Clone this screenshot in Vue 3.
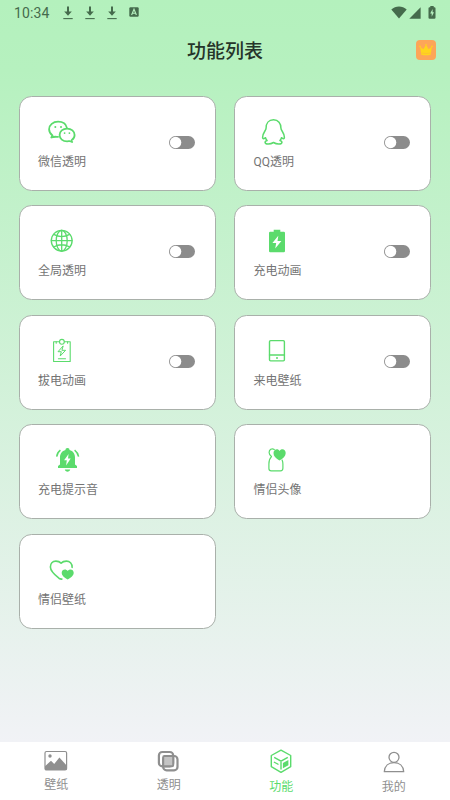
<script setup>
import { ref } from 'vue'

const features = ref([
  { icon: 'wechat', label: '微信透明', toggle: true, on: false },
  { icon: 'qq', label: 'QQ透明', toggle: true, on: false },
  { icon: 'globe', label: '全局透明', toggle: true, on: false },
  { icon: 'battery', label: '充电动画', toggle: true, on: false },
  { icon: 'clipboard', label: '拔电动画', toggle: true, on: false },
  { icon: 'phone', label: '来电壁纸', toggle: true, on: false },
  { icon: 'bell', label: '充电提示音', toggle: false, on: false },
  { icon: 'avatar', label: '情侣头像', toggle: false, on: false },
  { icon: 'hearts', label: '情侣壁纸', toggle: false, on: false }
])

const tabs = [
  { icon: 'picture', label: '壁纸' },
  { icon: 'layers', label: '透明' },
  { icon: 'cube', label: '功能' },
  { icon: 'person', label: '我的' }
]
const active = ref('cube')
</script>

<template>
  <div class="screen">
    <div class="status">
      <span class="time">10:34</span>
      <svg v-for="n in 3" :key="n" class="download" viewBox="0 0 10 14">
        <path d="M5 0.5V7" stroke="currentColor" stroke-width="2" fill="none" />
        <path d="M1.2 5.6H8.8L5 9.8Z" fill="currentColor" />
        <path d="M0.3 12.6H9.7" stroke="currentColor" stroke-width="1.1" />
      </svg>
      <svg class="app-badge" viewBox="0 0 10 10">
        <rect x="0.3" y="0.2" width="9.4" height="9.6" rx="1.2" fill="currentColor" />
        <path d="M2.6 8L5 2.2L7.4 8M3.5 6.2H6.5" fill="none" stroke="#b7f2c0" stroke-width="1.1" />
      </svg>
      <span class="spacer"></span>
      <svg class="wifi" viewBox="0 0 16 13"><path d="M0.3 3.5C4.7-.6 11.3-.6 15.7 3.5L8 12.6Z" fill="currentColor" /></svg>
      <svg class="signal" viewBox="0 0 12 12"><path d="M11.6 0.2V11.7H0.3Z" fill="currentColor" /></svg>
      <svg class="charge" viewBox="0 0 8 13">
        <path d="M2.3 0H5.7V1.2H6.4Q7.5 1.2 7.5 2.3V11.8Q7.5 12.8 6.4 12.8H1.6Q.5 12.8 .5 11.8V2.3Q.5 1.2 1.6 1.2H2.3Z" fill="currentColor" />
        <path d="M4.6 3L2.2 7.5H3.7V10.8L6 6.3H4.6Z" fill="#b7f2c0" />
      </svg>
    </div>

    <header class="header">
      <h1>功能列表</h1>
      <svg class="crown" viewBox="0 0 20 20">
        <rect width="20" height="20" rx="4" fill="#fda658" />
        <path d="M4.1 6.5L7.3 9.3L10 4.8L12.7 9.3L15.9 6.5L14.7 14.8Q10 15.8 5.3 14.8Z" fill="#ffd51c" />
        <circle cx="4" cy="6.4" r=".8" fill="#ffd51c" /><circle cx="10" cy="4.8" r=".8" fill="#ffd51c" /><circle cx="16" cy="6.4" r=".8" fill="#ffd51c" />
        <path d="M5.2 13Q10 14 14.8 13" fill="none" stroke="#fdb53c" stroke-width=".6" />
      </svg>
    </header>

    <main class="grid">
      <section v-for="item in features" :key="item.icon" class="card">
        <div class="info">
          <svg class="icon" viewBox="0 0 44 30" fill="none" stroke="currentColor" stroke-width="1.5" stroke-linecap="round" stroke-linejoin="round">
            <g v-if="item.icon === 'wechat'" stroke-width="1.8">
              <path d="M28.8 11.6C28 7.9 24.4 5.7 20.1 5.7C15 5.7 11.1 9 11.1 13.2C11.1 16 12.4 17.9 14.5 19.5L13.3 21.5C15.5 20.5 17.4 20.8 20.1 20.8" />
              <path d="M33.8 24C35.7 22.8 36.6 21.1 36.6 19C36.6 15.3 33.3 12.6 29.1 12.6C24.9 12.6 21.6 15.3 21.6 19C21.6 22.8 24.9 25.3 29.1 25.3C31.4 25.3 32.3 24.6 34.2 26" />
              <g fill="currentColor" stroke="none"><circle cx="17.3" cy="10.9" r="1" /><circle cx="23" cy="10.9" r="1" /><circle cx="26.6" cy="17.1" r=".9" /><circle cx="31.4" cy="17.1" r=".9" /></g>
            </g>
            <path v-else-if="item.icon === 'qq'" d="M20.5 3.8C15.6 3.8 13.1 7.4 13.1 12C13.1 14.6 9.5 17.1 9.6 21.2C9.7 23.8 11.2 22.6 12.5 21.7C12.7 23 13.3 23.8 14.1 24.5C11.2 25.4 11.4 27.9 14.9 28C17.4 28.1 18.9 27.5 20.5 26.5C22.1 27.5 23.6 28.1 26.1 28C29.6 27.9 29.8 25.4 26.9 24.5C27.7 23.8 28.3 23 28.5 21.7C29.8 22.6 31.3 23.8 31.4 21.2C31.5 17.1 27.9 14.6 27.9 12C27.9 7.4 25.4 3.8 20.5 3.8Z" />
            <g v-else-if="item.icon === 'globe'" stroke-width="1.3">
              <circle cx="23.7" cy="15.7" r="10.4" /><ellipse cx="23.7" cy="15.7" rx="5.5" ry="10.4" />
              <path d="M23.7 5.3V26.1M13.3 15.7H34.1M15.7 9.4Q23.7 13.9 31.7 9.4M15.7 22Q23.7 17.5 31.7 22" />
            </g>
            <g v-else-if="item.icon === 'battery'" stroke="none">
              <path d="M20.7 4.7H27.3V6.7H30.8Q32 6.7 32 7.9V26Q32 27.3 30.8 27.3H17.2Q16 27.3 16 26V7.9Q16 6.7 17.2 6.7H20.7Z" fill="currentColor" />
              <path d="M25.3 10.8L19.4 18.1H23.2L22.2 23.6L28.4 16H24.5Z" fill="#fff" />
            </g>
            <g v-else-if="item.icon === 'clipboard'" stroke-width="1.1">
              <path d="M21.4 6.8H15.6V26.5H32.2V6.8H26.4" /><circle cx="23.9" cy="6.8" r="2.4" />
              <path d="M18.2 6.8V8.3M29.6 6.8V8.3M20.4 23.7H27.5" />
              <path d="M24.9 11.2L20 16.7H23.3L22.2 21L27.6 15.3H24.3Z" stroke-width="1" />
            </g>
            <g v-else-if="item.icon === 'phone'" stroke-width="1.4">
              <rect x="16.5" y="5.6" width="14.9" height="20.3" rx="1.1" /><path d="M16.5 20H31.4" /><circle cx="24" cy="23" r="1" fill="currentColor" stroke="none" />
            </g>
            <g v-else-if="item.icon === 'bell'">
              <path d="M29.5 4C30.9 4 31.6 4.8 31.5 6.1C35 7 37 10 37 13.5V20.5L39 22V24H20V22L22 20.5V13.5C22 10 24 7 27.5 6.1C27.4 4.8 28.1 4 29.5 4ZM26.8 25.6H32.2C31.8 28.3 27.2 28.3 26.8 25.6Z" fill="currentColor" stroke="none" />
              <path d="M22.4 6.1Q19.1 8.6 18.7 12.6M36.6 6.1Q39.9 8.6 40.6 12.6" stroke-linecap="butt" />
              <path d="M30.6 9.9L26.1 16.3H28.8L28.1 21.4L32.7 14.6H30Z" fill="#fff" stroke="none" />
            </g>
            <g v-else-if="item.icon === 'avatar'" stroke-width="1.2">
              <path d="M21.3 5.4C18.7 3.8 16.1 5.8 16.1 8.6C16.1 10.4 16.8 11.3 18.5 12.6C16.7 14.3 15.9 16.9 15.9 20V24.5Q15.9 26.8 18.2 26.8H27.5Q29.9 26.8 29.9 24.3V20C29.9 18.5 29.7 17.3 29.1 16" />
              <path d="M26.4 16.6C22.6 14 20.5 12.1 20.5 9C20.5 5.3 24.8 3.9 26.7 6.9C28.9 4 32.7 5.5 32.7 9.1C32.7 12.1 30.1 14.6 26.4 16.6Z" fill="currentColor" stroke="none" />
            </g>
            <g v-else-if="item.icon === 'hearts'" stroke-width="1.6">
              <path d="M34.1 13.4C34.3 9.4 31.7 7.1 28.4 7.1C26.2 7.1 24.5 7.7 23.1 9.1C21.7 7.7 20 7.1 17.9 7.1C14.5 7.1 12.4 9.6 12.4 13C12.4 17.7 18 21.9 21.3 24.5Q22.3 25.2 23.9 25.1" />
              <path d="M29.7 25.6C26.2 23.2 23.7 21.6 23.7 18.7C23.7 15.4 27.8 14.2 29.7 17C31.6 14.2 35.7 15.4 35.7 18.7C35.7 21.6 33.1 23.3 29.7 25.6Z" fill="currentColor" stroke="none" />
            </g>
          </svg>
          <span class="label">{{ item.label }}</span>
        </div>
        <button v-if="item.toggle" class="switch" :class="{ on: item.on }" :aria-label="item.label" @click="item.on = !item.on">
          <svg viewBox="0 0 26 13">
            <rect class="track" width="26" height="13" rx="6.5" />
            <circle :cx="item.on ? 19.4 : 6.6" cy="6.5" r="5.7" fill="#fff" />
          </svg>
        </button>
      </section>
    </main>

    <nav class="tabs">
      <div v-for="tab in tabs" :key="tab.icon" class="tab" :class="[tab.icon, { active: active === tab.icon }]" @click="active = tab.icon">
        <svg v-if="tab.icon === 'picture'" class="tab-icon" viewBox="0 0 26 26">
          <rect x="2" y="3.5" width="21.6" height="18.4" rx="1.5" fill="none" stroke="currentColor" stroke-width="1.2" />
          <circle cx="7" cy="8" r="1.7" fill="currentColor" />
          <path d="M2 18.2L8 12.7L11.2 15.9L16.4 9.5L23.6 17.4V21.9H2Z" fill="currentColor" />
        </svg>
        <svg v-else-if="tab.icon === 'layers'" class="tab-icon" viewBox="0 0 26 26">
          <rect x="7.2" y="8" width="14.3" height="14.3" rx="3.4" fill="none" stroke="currentColor" stroke-width="2.2" />
          <rect x="2.9" y="4" width="14.3" height="14.3" rx="3.4" fill="none" stroke="currentColor" stroke-width="2.2" />
          <rect x="7.2" y="8" width="10" height="10.3" rx="1.2" fill="#c4c4c4" stroke="currentColor" stroke-width="2" />
        </svg>
        <svg v-else-if="tab.icon === 'cube'" class="tab-icon" viewBox="0 0 26 26">
          <path d="M13 2.1L22.7 7.5V18.7L13 24.3L3.3 18.7V7.5Z" fill="none" stroke="currentColor" stroke-width="1.4" stroke-linejoin="round" />
          <path d="M6.2 9.3L13 13.1L19.8 9.3M13 13.1V21.5M5.9 14L10.5 16.5" fill="none" stroke="currentColor" stroke-width="1.4" />
          <path d="M14.9 14.9L20.4 12V17.2L14.9 20.2Z" fill="currentColor" />
        </svg>
        <svg v-else class="tab-icon" viewBox="0 0 26 26" fill="none" stroke="currentColor" stroke-width="1.3">
          <circle cx="13" cy="9.3" r="5" /><path d="M3.3 23.7C3.7 18 7.6 14.7 13 14.7S22.3 18 22.7 23.7Z" stroke-linejoin="round" />
        </svg>
        <span>{{ tab.label }}</span>
      </div>
    </nav>
  </div>
</template>

<style>
body { margin: 0; }
</style>

<style scoped>
* { box-sizing: border-box; }
.screen {
  width: 450px;
  height: 800px;
  display: flex;
  flex-direction: column;
  overflow: hidden;
  font-family: Roboto, "Noto Sans CJK SC", sans-serif;
  background: linear-gradient(#b4f1bd 0, #b6f1bf 70px, #f1f2f6 742px);
}
.status {
  height: 26px;
  display: flex;
  align-items: center;
  padding: 0 14px;
  color: #456b4c;
}
.time { width: 48.5px; font-size: 14px; line-height: 26px; letter-spacing: 0.1px; }
.status svg { flex: none; }
.download { width: 10px; height: 14px; margin-right: 12px; }
.app-badge { width: 10px; height: 10px; margin-bottom: 2px; }
.spacer { flex: 1; }
.wifi { width: 16px; height: 13px; margin: 0 2px 2px 0; }
.signal { width: 12px; height: 12px; margin: 0 7px 1px 0; }
.charge { width: 8px; height: 13px; margin: 0 0 2px; }
.header {
  height: 48px;
  display: grid;
  grid-template-columns: 20px 1fr 20px;
  align-items: center;
  padding: 0 14px;
}
.header h1 {
  grid-column: 2;
  margin: 0;
  padding-top: 3px;
  text-align: center;
  font-size: 19px;
  line-height: 45px;
  font-weight: 500;
  color: #26352a;
}
.crown { width: 20px; height: 20px; }
.grid {
  flex: 1;
  display: grid;
  grid-template-columns: 196.6px 196.6px;
  grid-auto-rows: 94.8px;
  gap: 14.7px 18.8px;
  padding: 22px 19px 0;
}
.card {
  display: flex;
  justify-content: space-between;
  align-items: center;
  padding: 0 19.8px 0 18px;
  border: 1px solid #a9b0aa;
  border-radius: 12.5px;
  background: #fff;
}
.info { display: flex; flex-direction: column; align-self: flex-start; padding-top: 19px; }
.icon { display: block; width: 44px; height: 30px; color: #5bdb6c; }
.label { margin-top: 7px; font-size: 12px; line-height: 18px; color: #747474; white-space: nowrap; }
.switch {
  width: 26px;
  height: 13px;
  margin-bottom: 2px;
  padding: 0;
  border: 0;
  background: transparent;
  color: #8c8c8c;
}
.switch.on { color: #5bdb6c; }
.switch svg { display: block; width: 26px; height: 13px; }
.track { fill: currentColor; }
.tabs { height: 58px; flex: none; display: grid; grid-template-columns: repeat(4, 1fr); background: #fff; }
.tab {
  display: flex;
  flex-direction: column;
  align-items: center;
  padding-top: 6px;
  font-size: 12px;
  line-height: 16px;
  color: #8f8f8f;
}
.tab.active { color: #5bdb6c; }
.tab-icon { width: 26px; height: 26px; }
.tab.picture span, .tab.layers span { margin-top: 3px; }
.tab.cube span, .tab.person span { margin-top: 5px; }
</style>
